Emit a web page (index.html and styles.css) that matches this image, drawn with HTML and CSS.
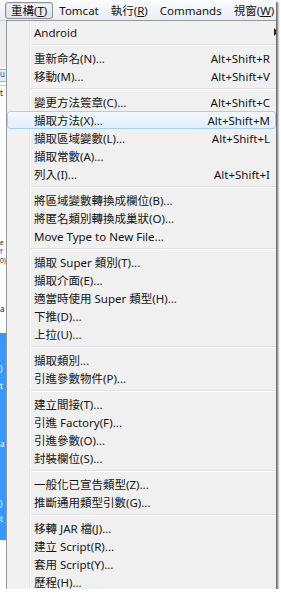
FILE: index.html
```html
<!DOCTYPE html>
<html lang="zh-Hant">
<head>
    <meta charset="UTF-8">
    <meta name="viewport" content="width=device-width, initial-scale=1.0">
    <title>重構選單</title>
    <link rel="stylesheet" href="styles.css">
</head>
<body>
    <div class="shot">
        <div class="menubar">
            <span class="bar-item active">重構(<u>T</u>)</span>
            <span class="bar-item">Tomcat</span>
            <span class="bar-item">執行(<u>R</u>)</span>
            <span class="bar-item">Commands</span>
            <span class="bar-item">視窗(<u>W</u>)</span>
        </div>

        <div class="workspace">
            <!-- the editor behind the menu, only a sliver shows -->
            <div class="side">
                <div class="side-tools"></div>
                <div class="side-tab">u</div>
                <div class="side-rule"></div>
                <div class="frag" style="height:11px">t</div>
                <div class="gap" style="height:141px"></div>
                <div class="lines">e<br><span class="link">f</span><br>0)</div>
                <div class="gap" style="height:39px"></div>
                <div class="frag" style="height:9px">a</div>
                <div class="gap" style="height:20px"></div>
                <div class="selection">
                    <div class="frag" style="height:40px">)</div>
                    <div class="frag" style="height:17px">t</div>
                    <div class="frag" style="height:58px">a</div>
                    <div class="frag" style="height:60px">)</div>
                    <div class="frag" style="height:15px">t</div>
                </div>
            </div>

            <div class="menu">
                <div class="item sub"><span>Android</span></div>
                <div class="sep"></div>
                <div class="item"><span>重新命名(N)...</span><span class="key">Alt+Shift+R</span></div>
                <div class="item"><span>移動(M)...</span><span class="key">Alt+Shift+V</span></div>
                <div class="sep"></div>
                <div class="item"><span>變更方法簽章(C)...</span><span class="key">Alt+Shift+C</span></div>
                <div class="item hover"><span>擷取方法(X)...</span><span class="key">Alt+Shift+M</span></div>
                <div class="item"><span>擷取區域變數(L)...</span><span class="key">Alt+Shift+L</span></div>
                <div class="item"><span>擷取常數(A)...</span></div>
                <div class="item"><span>列入(I)...</span><span class="key">Alt+Shift+I</span></div>
                <div class="sep"></div>
                <div class="item"><span>將區域變數轉換成欄位(B)...</span></div>
                <div class="item"><span>將匿名類別轉換成巢狀(O)...</span></div>
                <div class="item"><span>Move Type to New File...</span></div>
                <div class="sep"></div>
                <div class="item"><span>擷取 Super 類別(T)...</span></div>
                <div class="item"><span>擷取介面(E)...</span></div>
                <div class="item"><span>適當時使用 Super 類型(H)...</span></div>
                <div class="item"><span>下推(D)...</span></div>
                <div class="item"><span>上拉(U)...</span></div>
                <div class="sep"></div>
                <div class="item"><span>擷取類別...</span></div>
                <div class="item"><span>引進參數物件(P)...</span></div>
                <div class="sep"></div>
                <div class="item"><span>建立間接(T)...</span></div>
                <div class="item"><span>引進 Factory(F)...</span></div>
                <div class="item"><span>引進參數(O)...</span></div>
                <div class="item"><span>封裝欄位(S)...</span></div>
                <div class="sep"></div>
                <div class="item"><span>一般化已宣告類型(Z)...</span></div>
                <div class="item"><span>推斷通用類型引數(G)...</span></div>
                <div class="sep"></div>
                <div class="item"><span>移轉 JAR 檔(J)...</span></div>
                <div class="item"><span>建立 Script(R)...</span></div>
                <div class="item"><span>套用 Script(Y)...</span></div>
                <div class="item"><span>歷程(H)...</span></div>
            </div>
        </div>
    </div>
</body>
</html>
```

FILE: styles.css
```css
body {
    margin: 0;
    background: #fff;
    font-family: "Noto Sans", "Noto Sans CJK TC", sans-serif;
    font-size: 11.5px;
    color: #151515;
}

.shot {
    width: 276px;
    height: 589px;
    overflow: hidden;
    background: #fff;
    box-shadow: 2px 2px 2px rgba(0, 0, 0, 0.6);
}

/* menu bar */
.menubar {
    height: 20px;
    display: flex;
    align-items: center;
    padding-left: 5px;
    background: linear-gradient(#fbfcfd, #e9eef4);
    white-space: nowrap;
}

.bar-item {
    height: 17px;
    line-height: 15px;
    padding: 0 5px;
    border: 1px solid transparent;
    border-radius: 3px;
    box-sizing: border-box;
}

.bar-item.active {
    border-color: #8d9095;
    background: linear-gradient(#f1f3f6, #e0e5eb);
    box-shadow: inset 1px 1px 1px rgba(0, 0, 0, 0.08);
}

.workspace {
    display: flex;
    height: 569px;
}

/* sliver of the editor on the left */
.side {
    width: 6px;
    flex-shrink: 0;
    overflow: hidden;
    font-size: 8px;
    line-height: 8px;
}

.side-tools {
    height: 46px;
    border-top: 1px solid #c3cad3;
    background: #ececec;
}

.side-tab {
    height: 11px;
    margin-top: 2px;
    border-top: 1px solid #9fb3c8;
    border-bottom: 1px solid #9fb3c8;
    background: #e3edf7;
    color: #2a56b0;
}

.side-rule {
    height: 1px;
    margin-top: 3px;
    background: #c9c9c9;
}

.frag {
    display: flex;
    align-items: flex-end;
}

.lines {
    font-size: 6.5px;
    line-height: 9px;
    white-space: nowrap;
}

.link {
    color: #2020e0;
}

.selection {
    height: 207px;
    background: #3399ff;
    color: #fff;
}

/* drop-down menu */
.menu {
    flex: 1;
    min-width: 0;
    padding-top: 2px;
    border-top: 1px solid #979797;
    border-left: 1px solid #979797;
    background: linear-gradient(to right, #f1f1f1 22px, #e2e3e3 22px 23px, #fff 23px 24px, #f0f0f0 24px);
    white-space: nowrap;
}

.item {
    display: flex;
    align-items: center;
    height: 18px;
    padding: 0 6px 0 27px;
    box-sizing: border-box;
}

.item .key {
    margin-left: auto;
}

.item.hover {
    padding-left: 26px;
    padding-right: 5px;
    border: 1px solid #a8d1ec;
    border-radius: 3px;
    background: linear-gradient(#f3f9fd, #e0eefa);
}

.item.sub {
    padding-right: 0;
}

.item.sub::after {
    content: "";
    margin-left: auto;
    margin-right: -2px;
    border: 4px solid transparent;
    border-left: 4px solid #222;
    border-right: 0;
}

.sep {
    height: 8px;
    margin-left: 23px;
    background: linear-gradient(transparent 3px, #e0e0e0 3px 4px, #fff 4px 5px, transparent 5px);
}
```
